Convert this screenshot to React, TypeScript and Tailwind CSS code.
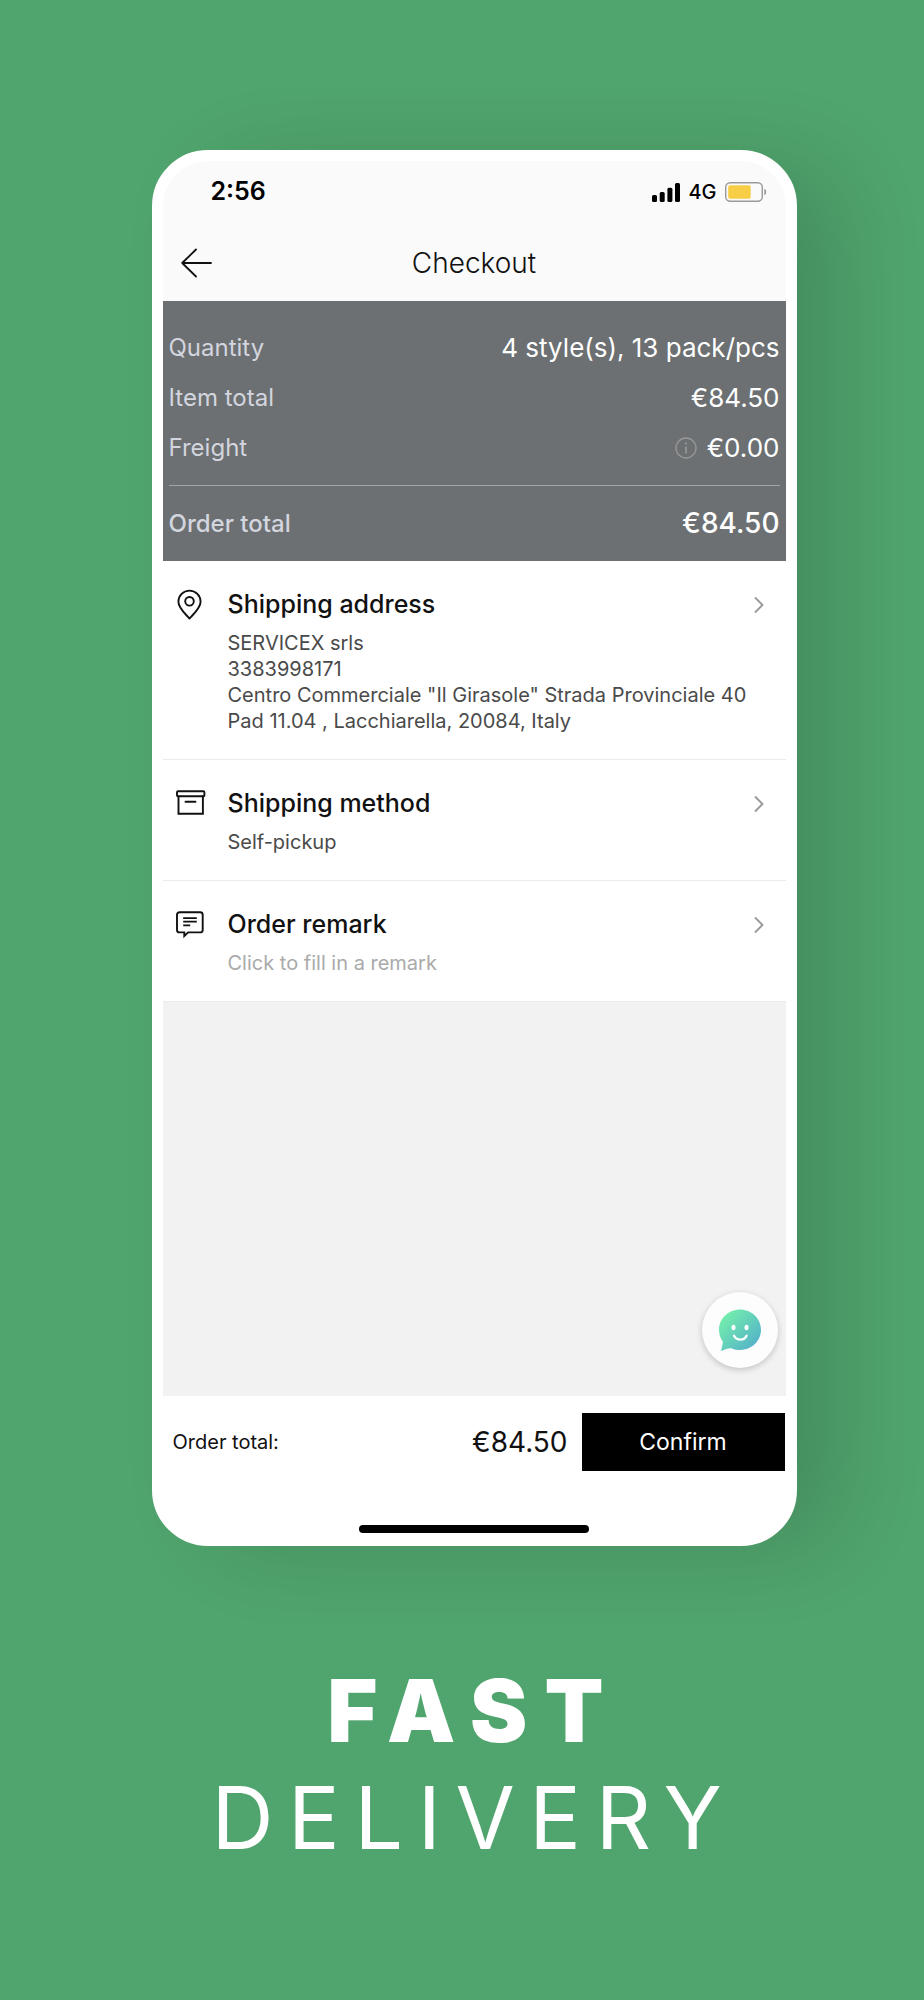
import type { ReactNode } from "react";

type SectionProps = {
  icon: ReactNode;
  title: string;
  lines: string[];
  muted?: boolean;
};

function PinIcon() {
  return (
    <svg width="28" height="32" viewBox="0 0 28 32" fill="none" stroke="#111" strokeWidth="1.9" aria-hidden="true">
      <path d="M13.5 29.5C9 24.5 2.4 19 2.4 12.7a11.1 11.1 0 0 1 22.2 0C24.6 19 18 24.5 13.5 29.5Z" strokeLinejoin="round" />
      <circle cx="13.5" cy="12.3" r="4.3" />
    </svg>
  );
}

function BoxIcon() {
  return (
    <svg width="30" height="32" viewBox="0 0 30 32" fill="none" stroke="#111" strokeWidth="1.9" aria-hidden="true">
      <rect x="1" y="3.3" width="27.4" height="5" rx="1" />
      <path d="M2.5 8.5v17.3h24.4V8.5M9.5 13.7h10" strokeLinecap="round" />
    </svg>
  );
}

function RemarkIcon() {
  return (
    <svg width="28" height="32" viewBox="0 0 28 32" fill="none" stroke="#111" strokeWidth="1.9" aria-hidden="true">
      <path d="M7.5 23.4H3.5a2.5 2.5 0 0 1-2.5-2.5V5.8a2.5 2.5 0 0 1 2.5-2.5h20.7a2.5 2.5 0 0 1 2.5 2.5v15.1a2.5 2.5 0 0 1-2.5 2.5H12.2L8.3 27v-3.6Z" />
      <path d="M7.2 9.1h13.6M7.2 12.7h13.6M7.2 16.3h7" strokeWidth="1.7" />
    </svg>
  );
}

function ChatFace() {
  return (
    <svg width="42" height="42" viewBox="0 0 42 42" fill="none" aria-hidden="true">
      <defs>
        <linearGradient id="face" x1="5" y1="5" x2="37" y2="36" gradientUnits="userSpaceOnUse">
          <stop stopColor="#74efac" />
          <stop offset="1" stopColor="#55b3c8" />
        </linearGradient>
      </defs>
      <path
        d="M21 .5C32.600.5 42 9.500 42 20.800S32.600 41 21 41c-3 0-5.500-.3-8-1.500-3-.9-6.500.8-9.800 2.200-.7.3-1.200 0-1-.8C3 38 3.800 35.500 3.700 32.500 1.500 29.500 0 25.500 0 20.800 0 9.500 9.400.5 21 .5Z"
        fill="url(#face)"
      />
      <ellipse cx="14.5" cy="18.5" rx="2" ry="2.8" fill="#fff" />
      <ellipse cx="27.5" cy="18.5" rx="2" ry="2.8" fill="#fff" />
      <path d="M15 26.7c2.8 5.2 10 5.2 12.600 0" stroke="#fff" strokeWidth="2.4" strokeLinecap="round" />
    </svg>
  );
}

function StatusBar() {
  return (
    <div className="flex h-[62px] items-center justify-between pr-[19px] pl-12">
      <span className="text-[25px] font-semibold text-black">2:56</span>
      <div className="flex items-center gap-2">
        <svg width="28" height="19" viewBox="0 0 28 19" fill="#000" aria-hidden="true">
          <rect x="0" y="12" width="5" height="7" rx="1.5" />
          <rect x="7.7" y="9" width="5" height="10" rx="1.5" />
          <rect x="15.4" y="4.7" width="5" height="14.3" rx="1.5" />
          <rect x="23" y="0" width="5" height="19" rx="1.5" />
        </svg>
        <span className="text-xl font-medium text-black">4G</span>
        <svg width="42" height="20" viewBox="0 0 42 20" fill="none" aria-hidden="true">
          <rect x="0.7" y="0.7" width="36.6" height="18.6" rx="4.5" stroke="#999" strokeWidth="1.4" />
          <rect x="3.2" y="3.2" width="22.5" height="13.6" rx="2" fill="#f7ce46" />
          <path d="M39.3 6.8c2.600.8 2.600 5.600 0 6.400Z" fill="#999" />
        </svg>
      </div>
    </div>
  );
}

function Section({ icon, title, lines, muted }: SectionProps) {
  return (
    <section className="flex items-start gap-6 border-b border-[#ebebeb] bg-white pt-7 pr-[14px] pb-[25px] pl-[13px]">
      <div className="w-7 shrink-0">{icon}</div>
      <div className="min-w-0 flex-1">
        <button className="flex h-8 w-full items-center justify-between pr-2">
          <h2 className="text-[25px] font-medium text-[#111]">{title}</h2>
          <svg width="10" height="18" viewBox="0 0 10 18" fill="none" stroke="#999" strokeWidth="1.9" aria-hidden="true">
            <path d="M1 1.500 8.500 9 1 16.500" />
          </svg>
        </button>
        <div className={muted ? "mt-[9px] text-xl leading-[26px] text-[#aaa]" : "mt-[9px] text-xl leading-[26px] text-[#4a4a4a]"}>
          {lines.map((line) => (
            <p key={line}>{line}</p>
          ))}
        </div>
      </div>
    </section>
  );
}

export default function App() {
  return (
    <main className="flex min-h-screen flex-col items-center bg-[#50a46d] pt-[150px] pb-[120px] pl-6 font-['Inter',sans-serif]">
      <div className="w-full max-w-[645px] overflow-hidden rounded-[56px] border-[11px] border-white bg-white shadow-[50px_8px_90px_-12px_rgba(0,0,0,0.15)]">
        <header className="rounded-t-[45px] bg-[#fafafa]">
          <StatusBar />
          <div className="grid h-[78px] grid-cols-3 items-center px-[18px] pt-[2px]">
            <button aria-label="Back" className="justify-self-start">
              <svg width="31" height="30" viewBox="0 0 31 30" fill="none" stroke="#111" strokeWidth="1.8" strokeLinecap="round" strokeLinejoin="round" aria-hidden="true">
                <path d="M15 1.500 1.200 15 15 28.500M1.200 15H30" />
              </svg>
            </button>
            <h1 className="text-center text-[28px] font-light text-[#111]">Checkout</h1>
          </div>
        </header>

        <dl className="bg-[#6c7072] px-[6px] pt-[22px] text-2xl text-[#d3d5df]">
          <div className="flex h-[50px] items-center justify-between">
            <dt>Quantity</dt>
            <dd className="text-[26px] text-white">4 style(s), 13 pack/pcs</dd>
          </div>
          <div className="flex h-[50px] items-center justify-between">
            <dt>Item total</dt>
            <dd className="text-[26px] text-white">€84.50</dd>
          </div>
          <div className="flex h-[50px] items-center justify-between">
            <dt>Freight</dt>
            <dd className="flex items-center gap-[10px] text-[26px] text-white">
              <svg width="22" height="22" viewBox="0 0 22 22" fill="none" stroke="#969696" strokeWidth="1.4" aria-hidden="true">
                <circle cx="11" cy="11" r="10" />
                <path d="M11 9.500v7M11 5.500v2" strokeWidth="1.8" />
              </svg>
              €0.00
            </dd>
          </div>
          <div className="mt-3 flex h-[76px] items-center justify-between border-t border-[#a3a5a6] font-medium">
            <dt>Order total</dt>
            <dd className="text-[28px] text-white">€84.50</dd>
          </div>
        </dl>

        <Section
          icon={<PinIcon />}
          title="Shipping address"
          lines={[
            "SERVICEX srls",
            "3383998171",
            'Centro Commerciale "Il Girasole" Strada Provinciale 40',
            "Pad 11.04 , Lacchiarella, 20084, Italy",
          ]}
        />
        <Section icon={<BoxIcon />} title="Shipping method" lines={["Self-pickup"]} />
        <Section icon={<RemarkIcon />} title="Order remark" lines={["Click to fill in a remark"]} muted />

        <div className="flex h-[394px] items-end justify-end bg-[#f2f2f2] pr-2 pb-7">
          <button
            aria-label="Chat"
            className="flex size-[76px] items-center justify-center rounded-full bg-[#fdfdfe] shadow-[0_2px_6px_rgba(0,0,0,0.2)]"
          >
            <ChatFace />
          </button>
        </div>

        <footer className="bg-white pt-[17px] pb-[2px]">
          <div className="flex items-center justify-between pr-px pl-[10px]">
            <span className="text-xl text-[#111]">Order total:</span>
            <div className="flex items-center gap-[14px]">
              <span className="text-[28px] text-[#111]">€84.50</span>
              <button className="h-[58px] w-[203px] bg-black text-[23px] text-white">Confirm</button>
            </div>
          </div>
          <div className="mx-auto mt-[54px] h-2 w-[230px] rounded-full bg-black" />
        </footer>
      </div>

      <h2 className="mt-[112px] text-center text-[86px] leading-[107px] text-white uppercase">
        <span className="block font-black tracking-[0.2em]">Fast</span>
        <span className="block font-normal tracking-[0.17em]">Delivery</span>
      </h2>
    </main>
  );
}
